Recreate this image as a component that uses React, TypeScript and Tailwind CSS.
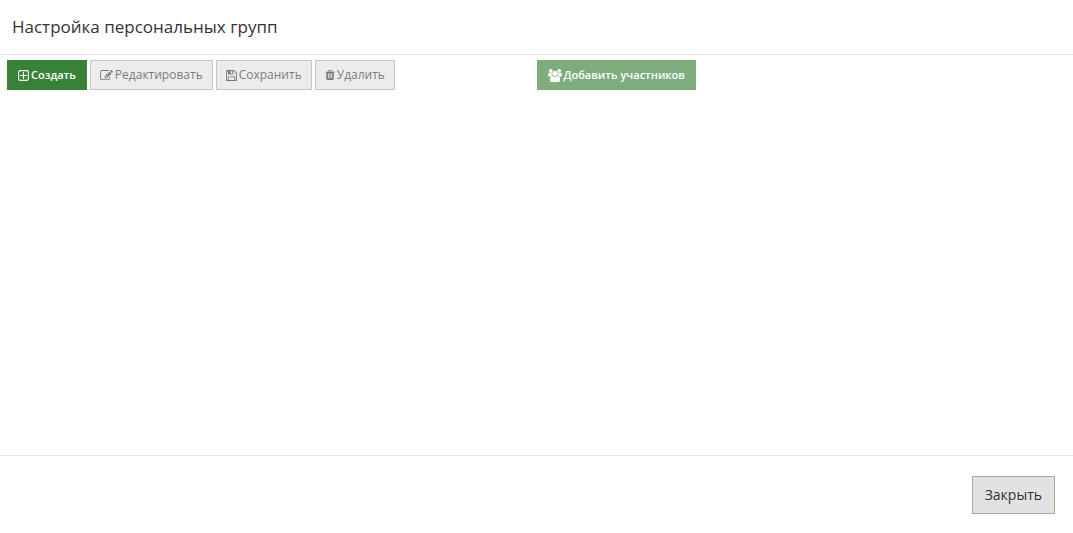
import type { ReactNode } from "react";

function PlusSquareIcon() {
  return (
    <svg viewBox="0 0 11 11" className="size-[11px]" fill="none" stroke="currentColor" aria-hidden="true">
      <rect x="0.6" y="0.6" width="9.8" height="9.8" rx="1.6" strokeWidth="1.1" />
      <path d="M5.5 2v7M2 5.5h7" strokeWidth="1.1" />
    </svg>
  );
}

function EditIcon() {
  return (
    <svg viewBox="0 128 1792 1536" className="h-[11px] w-[13px]" fill="currentColor" aria-hidden="true">
      <path d="M888 1184l116-116-152-152-116 116v56h96v96h56zm440-720q-16-16-33 1l-350 350q-17 17-1 33t33-1l350-350q17-17 1-33zm80 594v190q0 119-84.5 203.5t-203.5 84.5h-832q-119 0-203.5-84.5t-84.5-203.5v-832q0-119 84.5-203.5t203.5-84.5h832q63 0 117 25 15 7 18 23 3 17-9 29l-49 49q-14 14-32 8-23-6-45-6h-832q-66 0-113 47t-47 113v832q0 66 47 113t113 47h832q66 0 113-47t47-113v-126q0-13 9-22l64-64q15-15 35-7t20 29zm-96-738l288 288-672 672h-288v-288zm444 132l-92 92-288-288 92-92q28-28 68-28t68 28l152 152q28 28 28 68t-28 68z" />
    </svg>
  );
}

function FloppyIcon() {
  return (
    <svg viewBox="128 128 1536 1536" className="size-[11px]" fill="currentColor" aria-hidden="true">
      <path d="M512 1536h768v-384h-768v384zm896 0h128v-896q0-14-10-38.5t-20-34.5l-281-281q-10-10-34-20t-39-10v416q0 40-28 68t-68 28h-576q-40 0-68-28t-28-68v-416h-128v1280h128v-416q0-40 28-68t68-28h832q40 0 68 28t28 68v416zm-384-928v-320q0-13-9.5-22.5t-22.5-9.5h-192q-13 0-22.5 9.5t-9.5 22.5v320q0 13 9.5 22.5t22.5 9.5h192q13 0 22.5-9.5t9.5-22.5zm640 32v928q0 40-28 68t-68 28h-1344q-40 0-68-28t-28-68v-1344q0-40 28-68t68-28h928q40 0 88 20t76 48l280 280q28 28 48 76t20 88z" />
    </svg>
  );
}

function TrashIcon() {
  return (
    <svg viewBox="192 128 1408 1536" className="size-[10px]" fill="currentColor" aria-hidden="true">
      <path d="M704 1376v-704q0-14-9-23t-23-9h-64q-14 0-23 9t-9 23v704q0 14 9 23t23 9h64q14 0 23-9t9-23zm256 0v-704q0-14-9-23t-23-9h-64q-14 0-23 9t-9 23v704q0 14 9 23t23 9h64q14 0 23-9t9-23zm256 0v-704q0-14-9-23t-23-9h-64q-14 0-23 9t-9 23v704q0 14 9 23t23 9h64q14 0 23-9t9-23zm-544-992h448l-48-117q-7-9-17-11h-317q-10 2-17 11zm928 32v64q0 14-9 23t-23 9h-96v948q0 83-47 143.5t-113 60.5h-832q-66 0-113-58.5t-47-141.5v-952h-96q-14 0-23-9t-9-23v-64q0-14 9-23t23-9h309l70-167q15-37 54-63t79-26h320q40 0 79 26t54 63l70 167h309q14 0 23 9t9 23z" />
    </svg>
  );
}

function UsersIcon() {
  return (
    <svg viewBox="0 0 1920 1792" className="h-[13px] w-[14px]" fill="currentColor" aria-hidden="true">
      <path d="M593 896q-162 5-265 128h-134q-82 0-138-40.5t-56-118.5q0-353 124-353 6 0 43.5 21t97.5 42.5 119 21.5q67 0 133-23-5 37-5 66 0 139 81 256zm1071 637q0 120-73 189.5t-194 69.5h-874q-121 0-194-69.5t-73-189.5q0-53 3.5-103.5t14-109 26.5-108.5 43-97.5 62-81 85.5-53.5 111.5-20q10 0 43 21.5t73 48 107 48 135 21.5 135-21.5 107-48 73-48 43-21.5q61 0 111.5 20t85.5 53.5 62 81 43 97.5 26.5 108.5 14 109 3.5 103.5zm-1024-1277q0 106-75 181t-181 75-181-75-75-181 75-181 181-75 181 75 75 181zm704 384q0 159-112.5 271.5t-271.5 112.5-271.5-112.5-112.5-271.5 112.5-271.5 271.5-112.5 271.5 112.5 112.5 271.5zm576 225q0 78-56 118.5t-138 40.5h-134q-103-123-265-128 81-117 81-256 0-29-5-66 66 23 133 23 59 0 119-21.5t97.5-42.5 43.5-21q124 0 124 353zm-128-609q0 106-75 181t-181 75-181-75-75-181 75-181 181-75 181 75 75 181z" />
    </svg>
  );
}

type ToolButtonProps = {
  icon: ReactNode;
  label: string;
  variant: "primary" | "default";
  disabled?: boolean;
};

function ToolButton({ icon, label, variant, disabled }: ToolButtonProps) {
  const look =
    variant === "primary"
      ? "border-[#388238] bg-[#388238] px-[10px] text-[11px] font-semibold text-white"
      : "border-[#aea79f] bg-[#e2e2e2] px-[9px] text-xs text-[#333333]";

  return (
    <button
      type="button"
      disabled={disabled}
      className={`flex h-[30px] items-center gap-[2px] border whitespace-nowrap disabled:opacity-65 ${look}`}
    >
      {icon}
      <span>{label}</span>
    </button>
  );
}

export default function App() {
  return (
    <div className="flex min-h-screen flex-col bg-white font-['Open_Sans','Noto_Sans',sans-serif] text-[#333333]">
      {/* HEADER */}
      <header className="border-b border-[#e5e5e5] px-3 py-[15px]">
        <h1 className="text-[17px] leading-6">Настройка персональных групп</h1>
      </header>

      {/* TOOLBARS */}
      <main className="grid flex-1 grid-cols-2 content-start pt-[5px]">
        <div className="flex gap-[3px] pl-[7px]">
          <ToolButton icon={<PlusSquareIcon />} label="Создать" variant="primary" />
          <ToolButton icon={<EditIcon />} label="Редактировать" variant="default" disabled />
          <ToolButton icon={<FloppyIcon />} label="Сохранить" variant="default" disabled />
          <ToolButton icon={<TrashIcon />} label="Удалить" variant="default" disabled />
        </div>
        <div className="flex">
          <ToolButton icon={<UsersIcon />} label="Добавить участников" variant="primary" disabled />
        </div>
      </main>

      {/* FOOTER */}
      <footer className="flex justify-end border-t border-[#e5e5e5] px-[18px] pt-5 pb-[19px]">
        <button type="button" className="h-[38px] border border-[#aea79f] bg-[#e2e2e2] px-3 text-sm">
          Закрыть
        </button>
      </footer>
    </div>
  );
}
